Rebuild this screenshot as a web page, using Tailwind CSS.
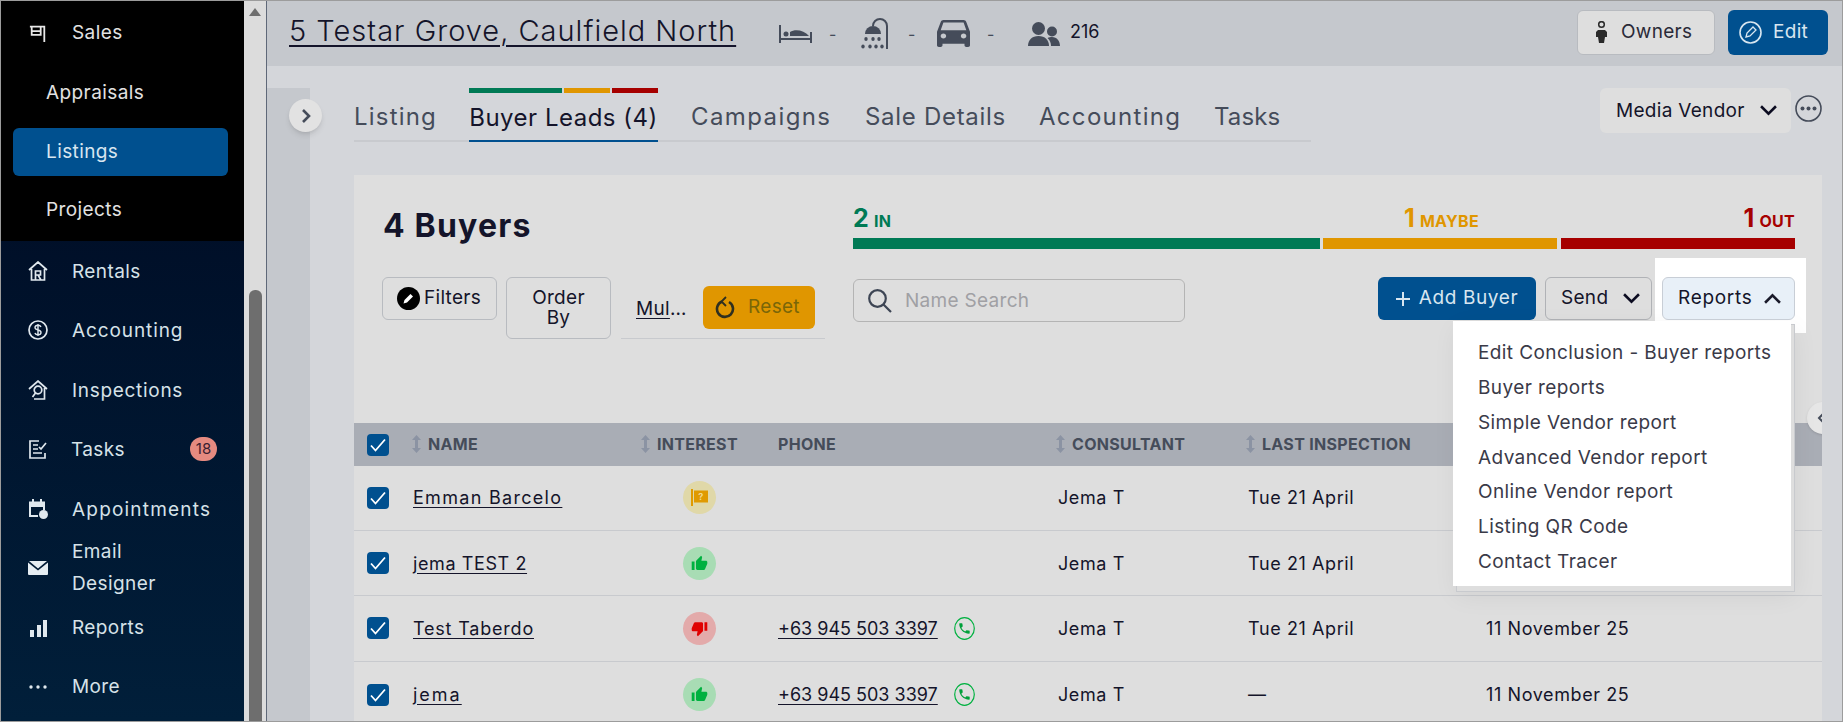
<!DOCTYPE html>
<html lang="en">
<head>
  <meta charset="UTF-8" />
  <title>Buyer Leads</title>
  <script src="https://cdn.jsdelivr.net/npm/@tailwindcss/browser@4"></script>
</head>
<body class="bg-[#d4d6da] text-[#14142a] font-['Inter',sans-serif] text-[19px] tracking-[0.3px]">
  <svg class="hidden">
    <symbol id="check" viewBox="0 0 22 22"><path d="M4 11.500l4.500 5L18 5.500" fill="none" stroke="#fff" stroke-width="1.800"/></symbol>
    <symbol id="sort" viewBox="0 0 9 18"><path d="M4.500 0L9 5H6v8h3l-4.500 5L0 13h3V5H0z" fill="#8b93a3"/></symbol>
    <symbol id="up" viewBox="0 0 24 24"><path d="M1 21h4V9H1v12zm22-11c0-1.100-.9-2-2-2h-6.310l.95-4.570.03-.32c0-.41-.17-.79-.44-1.060L14.170 1 7.590 7.590C7.220 7.950 7 8.450 7 9v10c0 1.100.9 2 2 2h9c.83 0 1.540-.5 1.840-1.220l3.020-7.050c.09-.23.14-.47.14-.73v-2z"/></symbol>
    <symbol id="phone" viewBox="0 0 21 23"><ellipse cx="10.500" cy="11.500" rx="9.800" ry="10.800" fill="none" stroke="#00b140" stroke-width="1.200"/><path transform="translate(3.500 4.500) scale(.58)" d="M6.620 10.790c1.440 2.830 3.760 5.140 6.590 6.590l2.200-2.200c.27-.27.67-.36 1.020-.24 1.120.37 2.330.57 3.570.57.55 0 1 .45 1 1V20c0 .55-.45 1-1 1-9.390 0-17-7.610-17-17 0-.55.45-1 1-1h3.500c.55 0 1 .45 1 1 0 1.250.2 2.450.57 3.570.11.35.03.74-.25 1.020l-2.200 2.200z" fill="#00a03a"/></symbol>
  </svg>

  <div class="flex h-[722px] w-[1843px] overflow-hidden border border-[#9c9c9c]">
    <!-- sidebar -->
    <aside class="flex w-[243px] shrink-0 flex-col bg-gradient-to-b from-[#000820] to-[#011f3a] text-[#d6e2e8] tracking-[0.4px]">
      <div class="h-[240px] shrink-0 bg-black text-[#e2e2e2]">
        <div class="flex h-[61px] items-center pt-[3px]">
          <svg class="ml-[28px] mr-[25px] h-[18px] w-[18px]" viewBox="0 0 20 20" fill="none" stroke="#e8e8e8" stroke-width="2"><path d="M1 3h17M17 3v17M3 3v9h10V3M3 8h10"/></svg>
          <span>Sales</span>
        </div>
        <div class="flex h-[60px] items-center pl-[45px] pt-[2px]">Appraisals</div>
        <div class="ml-[12px] mr-[16px] mt-[6px] flex h-[48px] items-center rounded-md bg-[#00508f] pl-[33px] text-[#d8e6f0]">Listings</div>
        <div class="flex h-[65px] items-center pl-[45px] pt-[4px]">Projects</div>
      </div>
      <div class="flex h-[59.500px] items-center">
        <svg class="ml-[27px] mr-[24px] h-[20px] w-[20px]" viewBox="0 0 20 20" fill="none" stroke="#e0e8ee" stroke-width="1.700"><path d="M1 9l9-8 9 8M3.500 8v11h13V8M7.500 19v-9h5v4h-5M10 14l3 5"/></svg>
        <span class="pt-[2px]">Rentals</span>
      </div>
      <div class="flex h-[59.500px] items-center">
        <svg class="ml-[27px] mr-[24px] h-[20px] w-[20px]" viewBox="0 0 20 20" fill="none" stroke="#e0e8ee" stroke-width="1.700"><circle cx="10" cy="10" r="9"/><path d="M13 7c-.5-1.200-1.600-1.700-3-1.700-1.700 0-3 .8-3 2.300 0 3.300 6 1.600 6 4.800 0 1.500-1.300 2.300-3 2.300-1.500 0-2.600-.6-3.100-1.800M10 4v12" stroke-width="1.400"/></svg>
        <span class="pt-[2px] tracking-[0.9px]">Accounting</span>
      </div>
      <div class="flex h-[59.500px] items-center">
        <svg class="ml-[27px] mr-[24px] h-[20px] w-[20px]" viewBox="0 0 20 20" fill="none" stroke="#e0e8ee" stroke-width="1.700"><path d="M1 9l9-8 9 8M16.500 8v11H6"/><circle cx="10" cy="10" r="3.800"/><path d="M7.500 13l-3 4"/></svg>
        <span class="pt-[2px] tracking-[0.7px]">Inspections</span>
      </div>
      <div class="flex h-[59.500px] items-center">
        <svg class="ml-[27px] mr-[23px] h-[20px] w-[20px]" viewBox="0 0 20 20" fill="none" stroke="#e0e8ee" stroke-width="1.700"><path d="M11 2H2v17h15v-5M5 6h5M5 10h5M5 14h9M11 8l2 2 5-6"/></svg>
        <span class="w-[119px] pt-[2px]">Tasks</span>
        <span class="flex h-[24px] w-[27px] items-center justify-center rounded-full bg-[#e58a80] text-[15px] tracking-normal text-[#3a2030]">18</span>
      </div>
      <div class="flex h-[59.500px] items-center">
        <svg class="ml-[27px] mr-[24px] h-[20px] w-[20px]" viewBox="0 0 20 20" fill="#e0e8ee"><path d="M4 0h2v3H4zM12 0h2v3h-2z"/><path d="M1 2.500h16V11h-2V8H3v8h7v2H1z"/><circle cx="15.500" cy="15.500" r="4.500"/></svg>
        <span class="pt-[2px] tracking-[1.200px]">Appointments</span>
      </div>
      <div class="flex h-[59.500px] items-center">
        <svg class="ml-[27px] mr-[24px] h-[20px] w-[20px]" viewBox="0 0 20 14" fill="#e6edf2"><path d="M1 0h18l-9 7.500zM0 1.500l10 8 10-8V13a1 1 0 01-1 1H1a1 1 0 01-1-1z"/></svg>
        <span class="leading-[32px]">Email<br>Designer</span>
      </div>
      <div class="flex h-[59.500px] items-center">
        <svg class="ml-[27px] mr-[24px] h-[20px] w-[20px]" viewBox="0 0 20 20" fill="#e0e8ee"><path d="M2 12h4v7H2zM9 7h4v12H9zM15 2h4v17h-4z"/></svg>
        <span>Reports</span>
      </div>
      <div class="flex h-[59.500px] items-center">
        <svg class="ml-[27px] mr-[24px] h-[20px] w-[20px]" viewBox="0 0 20 20" fill="#e0e8ee"><circle cx="3" cy="10" r="1.700"/><circle cx="10" cy="10" r="1.700"/><circle cx="17" cy="10" r="1.700"/></svg>
        <span>More</span>
      </div>
    </aside>

    <!-- scrollbar -->
    <div class="flex w-[22px] shrink-0 flex-col items-center bg-[#dcdcdc] pt-[7px]">
      <div class="h-0 w-0 border-x-[6px] border-b-[8px] border-x-transparent border-b-[#6e6e6e]"></div>
      <div class="mt-[274px] h-[440px] w-[13px] rounded-t-md bg-[#6e6e6e]"></div>
    </div>

    <main class="relative flex min-w-0 flex-1 flex-col border-l border-[#5f6878]">
      <header class="flex h-[65px] shrink-0 items-center bg-[#c5c8cd] pl-[22px]">
        <a class="-mt-[5px] w-[447px] whitespace-nowrap text-[29px] font-light tracking-[1px] underline decoration-[1.500px] underline-offset-[4px]">5 Testar Grove, Caulfield North</a>
        <svg class="ml-[43px] h-[18px] w-[33px]" viewBox="0 0 33 18" fill="#454c5a"><path d="M0 0h2v18H0zM31 7h2v11h-2zM2 13h29v2H2z"/><circle cx="7" cy="9" r="2.500"/><path d="M11 11V7c5-3 14-2 19 4z"/></svg>
        <span class="ml-[17px] w-[6px] text-[16px] text-[#454c5a]">-</span>
        <svg class="ml-[26px] h-[31px] w-[27px]" viewBox="0 0 27 31" fill="#454c5a"><path d="M26 31V8a7 7 0 00-14 0" fill="none" stroke="#454c5a" stroke-width="2"/><path d="M4 16a8 8 0 0116 0z"/><ellipse cx="5" cy="21" rx="1.700" ry="2"/><ellipse cx="12" cy="21" rx="1.700" ry="2"/><ellipse cx="18" cy="21" rx="1.700" ry="2"/><ellipse cx="2" cy="28.500" rx="1.700" ry="2"/><ellipse cx="9" cy="28.500" rx="1.700" ry="2"/><ellipse cx="15" cy="28.500" rx="1.700" ry="2"/><ellipse cx="21" cy="28.500" rx="1.700" ry="2"/></svg>
        <span class="ml-[20px] w-[6px] text-[16px] text-[#454c5a]">-</span>
        <svg class="ml-[23px] h-[27px] w-[33px]" viewBox="3 5 18 16" preserveAspectRatio="none" fill="#454c5a"><path d="M18.920 6.010C18.720 5.420 18.160 5 17.500 5h-11c-.66 0-1.210.42-1.420 1.010L3 12v8c0 .55.45 1 1 1h1c.55 0 1-.45 1-1v-1h12v1c0 .55.45 1 1 1h1c.55 0 1-.45 1-1v-8l-2.080-5.990zM6.500 16c-.83 0-1.500-.67-1.500-1.500S5.670 13 6.500 13s1.500.67 1.500 1.500S7.330 16 6.500 16zm11 0c-.83 0-1.500-.67-1.500-1.500s.67-1.500 1.500-1.500 1.500.67 1.500 1.500-.67 1.500-1.500 1.500zM5 11l1.500-4.500h11L19 11H5z"/></svg>
        <span class="ml-[17px] w-[6px] text-[16px] text-[#454c5a]">-</span>
        <svg class="ml-[35px] h-[24px] w-[32px]" viewBox="0 0 32 24" fill="#454c5a"><circle cx="10.500" cy="6.500" r="6.500"/><path d="M0 24c0-6 4-10 10.500-10S21 18 21 24z"/><circle cx="24" cy="9.500" r="5"/><path d="M23 24c0-3-1-6-3.500-8 1.500-1 3-1 4.500-1 5 0 8 4 8 9z"/></svg>
        <span class="-mt-[4px] ml-[10px] text-[18px] tracking-normal">216</span>
        <button class="-mt-[3px] ml-auto flex h-[45px] w-[138px] items-center rounded-md border border-[#b8bbc0] bg-[#dedede] pl-[18px]">
          <svg class="h-[22px] w-[11px]" viewBox="0 0 11 22" fill="#2a2a2a"><circle cx="5.500" cy="3.500" r="2.800" fill="none" stroke="#2a2a2a" stroke-width="1.500"/><path d="M2 9h7l2 2v5H9l-1 6H3l-1-6H0v-5z"/></svg>
          <span class="ml-[14px] text-[#2a2a38]">Owners</span>
        </button>
        <button class="-mt-[3px] ml-[13px] mr-[14px] flex h-[45px] w-[100px] items-center rounded-md bg-[#00508f] pl-[11px] text-[#d8e6f0]">
          <svg class="h-[23px] w-[23px]" viewBox="0 0 23 23" fill="none" stroke="#d8e6f0" stroke-width="1.600"><circle cx="11.500" cy="11.500" r="10.500"/><path d="M7 16l1-4 6-6 3 3-6 6z" stroke-width="1.300"/></svg>
          <span class="ml-[11px]">Edit</span>
        </button>
      </header>

      <div class="relative flex min-h-0 flex-1">
        <div class="mt-[22px] w-[43px] shrink-0 bg-[#c5c8cd]"></div>
        <div class="ml-[44px] mr-[20px] flex min-w-0 flex-1 flex-col pt-[22px]">
          <!-- tabs -->
          <div class="flex h-[54px] shrink-0 items-start justify-between">
            <div class="flex h-[54px] w-[957px] items-end gap-[33px] border-b-2 border-[#c8cace] text-[24px] tracking-[0.7px] text-[#454c5a]">
              <div class="flex h-[54px] w-[82px] items-center pt-[7px] tracking-[1.200px]">Listing</div>
              <div class="-mb-[2px] flex h-[54px] w-[189px] flex-col border-b-2 border-[#00508f] text-[#14142a]">
                <div class="flex h-[5px] gap-[2px]"><div class="w-[93px] bg-[#007a55]"></div><div class="w-[46px] bg-[#e09600]"></div><div class="w-[46px] bg-[#a60000]"></div></div>
                <div class="flex flex-1 items-center justify-center whitespace-nowrap pt-[2px] tracking-[0.5px]">Buyer Leads (4)</div>
              </div>
              <div class="flex h-[54px] w-[141px] items-center pt-[7px] tracking-[1.400px]">Campaigns</div>
              <div class="flex h-[54px] w-[141px] items-center whitespace-nowrap pt-[7px]">Sale Details</div>
              <div class="flex h-[54px] w-[142px] items-center pt-[7px] tracking-[1.300px]">Accounting</div>
              <div class="flex h-[54px] w-[65px] items-center pt-[7px] tracking-[0.1px]">Tasks</div>
            </div>
            <div class="flex items-start">
              <button class="flex h-[45px] w-[191px] items-center rounded-md bg-[#dedede] pl-[16px]">
                <span class="w-[144px] whitespace-nowrap pt-[2px] text-left">Media Vendor</span>
                <svg class="h-[11px] w-[17px]" viewBox="0 0 16 10" fill="none" stroke="#0b0b20" stroke-width="2.400"><path d="M1 1l7 7 7-7"/></svg>
              </button>
              <svg class="ml-[4px] mt-[7px] h-[27px] w-[27px]" viewBox="0 0 27 27" fill="#454c5a"><circle cx="13.500" cy="13.500" r="12.500" fill="none" stroke="#454c5a" stroke-width="1.600"/><circle cx="7.500" cy="13.500" r="2"/><circle cx="13.500" cy="13.500" r="2"/><circle cx="19.500" cy="13.500" r="2"/></svg>
            </div>
          </div>

          <!-- panel -->
          <section class="relative mt-[33px] flex min-h-0 flex-1 flex-col overflow-hidden bg-[#dedede]">
            <div class="grid h-[248px] shrink-0 grid-cols-[499px_1fr] pr-[28px]">
              <div>
                <div class="flex h-[102px] items-center pl-[29px] text-[32px] font-bold tracking-[1.200px]">4 Buyers</div>
                <div class="ml-[28px] flex items-start">
                  <button class="flex h-[43px] w-[115px] items-center rounded-md border border-[#b8bbc0] pl-[14px]">
                    <svg class="h-[23px] w-[23px]" viewBox="0 0 23 23"><circle cx="11.500" cy="11.500" r="11.500" fill="#000"/><path d="M6.500 16.500l1-3.500 6-6 2.500 2.500-6 6z" fill="#fff"/></svg>
                    <span class="ml-[4px]">Filters</span>
                  </button>
                  <button class="ml-[9px] h-[62px] w-[105px] rounded-md border border-[#b8bbc0] leading-[20px]">Order<br>By</button>
                  <div class="ml-[10px] flex h-[62px] w-[204px] items-start border-b border-[#c8cace]">
                    <span class="ml-[15px] mt-[18px] w-[47px] whitespace-nowrap"><span class="underline underline-offset-[3px]">Mul</span>…</span>
                    <button class="ml-[20px] mt-[9px] flex h-[43px] w-[112px] items-center rounded-md bg-[#e09600] pl-[12px] text-[#7a6608]">
                      <svg class="h-[24px] w-[20px]" viewBox="0 0 20 24" fill="none" stroke="#2f3020" stroke-width="2.600"><path d="M7 5.500A8 8 0 1 0 14 6"/><path d="M11 1L6.500 5.500 11 10" stroke-width="1.800"/></svg>
                      <span class="ml-[13px]">Reset</span>
                    </button>
                  </div>
                </div>
              </div>
              <div class="pt-[32px]">
                <div class="flex h-[24px] items-center font-bold">
                  <div class="w-[470px] text-[#007a55]"><span class="text-[25px]">2</span> <span class="text-[16px]">IN</span></div>
                  <div class="w-[237px] text-center text-[#e09600]"><span class="text-[25px]">1</span> <span class="text-[16px]">MAYBE</span></div>
                  <div class="flex-1 text-right text-[#a60000]"><span class="text-[25px]">1</span> <span class="text-[16px]">OUT</span></div>
                </div>
                <div class="mt-[7px] flex h-[11px] gap-[3px]">
                  <div class="w-[467px] bg-[#007a55]"></div>
                  <div class="w-[234px] bg-[#e09600]"></div>
                  <div class="ml-px flex-1 bg-[#a60000]"></div>
                </div>
                <div class="mt-[28px] flex items-start">
                  <div class="mt-[2px] flex h-[43px] w-[332px] items-center rounded-md border border-[#b4b4b4] pl-[14px] text-[#a0a0a4]">
                    <svg class="h-[24px] w-[24px]" viewBox="0 0 24 24" fill="none" stroke="#3d4554" stroke-width="2.200"><circle cx="9.500" cy="9.500" r="8.300"/><path d="M15.500 15.500L23 23"/></svg>
                    <span class="ml-[13px] pt-[2px]">Name Search</span>
                  </div>
                  <button class="ml-[193px] flex h-[43px] w-[158px] items-center justify-center gap-[9px] rounded-md bg-[#00508f] text-[#d8e6f0]">
                    <svg class="h-[14px] w-[14px]" viewBox="0 0 14 14" fill="#d8e6f0"><path d="M6 0h2v6h6v2H8v6H6V8H0V6h6z"/></svg>
                    <span class="whitespace-nowrap tracking-[0.6px]">Add Buyer</span>
                  </button>
                  <button class="ml-[9px] flex h-[43px] w-[107px] items-center rounded-md border border-[#b0b2b6] pl-[15px]">
                    <span class="w-[62px] text-left">Send</span>
                    <svg class="h-[11px] w-[17px]" viewBox="0 0 16 10" fill="none" stroke="#0b0b20" stroke-width="2.400"><path d="M1 1l7 7 7-7"/></svg>
                  </button>
                  <button class="relative z-20 ml-[10px] flex h-[43px] w-[133px] items-center rounded-md border border-[#c8ced6] bg-[#e8f0f8] pl-[15px]">
                    <span class="w-[86px] text-left tracking-[0.7px]">Reports</span>
                    <svg class="h-[11px] w-[17px]" viewBox="0 0 16 10" fill="none" stroke="#1a1a2a" stroke-width="2.400"><path d="M1 9l7-7 7 7"/></svg>
                  </button>
                </div>
              </div>
            </div>

            <!-- table -->
            <div class="grid h-[43px] shrink-0 grid-cols-[58px_229px_137px_278px_190px_240px_1fr] items-center bg-[#a9adb5] text-[16px] font-bold text-[#454c5a]">
              <div class="pl-[13px]"><svg class="h-[22px] w-[22px] rounded-[4px] bg-[#00508f]"><use href="#check"/></svg></div>
              <div class="flex items-center gap-[7px] pb-[2px]"><svg class="h-[18px] w-[9px]"><use href="#sort"/></svg>NAME</div>
              <div class="flex items-center gap-[7px] pb-[2px]"><svg class="h-[18px] w-[9px]"><use href="#sort"/></svg>INTEREST</div>
              <div class="pb-[2px]">PHONE</div>
              <div class="flex items-center gap-[7px] pb-[2px]"><svg class="h-[18px] w-[9px]"><use href="#sort"/></svg>CONSULTANT</div>
              <div class="flex items-center gap-[7px] pb-[2px]"><svg class="h-[18px] w-[9px]"><use href="#sort"/></svg>LAST INSPECTION</div>
              <div></div>
            </div>

            <div class="grid h-[65px] shrink-0 grid-cols-[58px_229px_137px_278px_190px_240px_1fr] items-center border-b border-[#c8cace] pb-[1px] text-[18px] tracking-[0.6px]">
              <div class="pl-[13px]"><svg class="h-[22px] w-[22px] rounded-[4px] bg-[#00508f]"><use href="#check"/></svg></div>
              <div class="pl-px"><a class="tracking-[1.300px] underline underline-offset-[3px]">Emman Barcelo</a></div>
              <div class="pl-[42px]"><span class="flex h-[33px] w-[33px] items-center justify-center rounded-full bg-[#e0d8a8]"><svg class="h-[17px] w-[17px]" viewBox="0 0 17 17" fill="#e09a00"><path d="M0 0h2v17H0zM3 1.500h14v12H3z"/><text x="10" y="11" font-size="9" font-weight="700" text-anchor="middle" fill="#f0d890">?</text></svg></span></div>
              <div></div>
              <div class="pl-[2px]">Jema T</div>
              <div class="pl-[2px]">Tue 21 April</div>
              <div></div>
            </div>
            <div class="grid h-[65px] shrink-0 grid-cols-[58px_229px_137px_278px_190px_240px_1fr] items-center border-b border-[#c8cace] text-[18px] tracking-[0.6px]">
              <div class="pl-[13px]"><svg class="h-[22px] w-[22px] rounded-[4px] bg-[#00508f]"><use href="#check"/></svg></div>
              <div class="pl-px"><a class="underline underline-offset-[3px]">jema TEST 2</a></div>
              <div class="pl-[42px]"><span class="flex h-[33px] w-[33px] items-center justify-center rounded-full bg-[#a8dcb4]"><svg class="h-[17px] w-[17px] fill-[#00b140]"><use href="#up"/></svg></span></div>
              <div></div>
              <div class="pl-[2px]">Jema T</div>
              <div class="pl-[2px]">Tue 21 April</div>
              <div></div>
            </div>
            <div class="grid h-[66px] shrink-0 grid-cols-[58px_229px_137px_278px_190px_240px_1fr] items-center border-b border-[#c8cace] pb-[1px] text-[18px] tracking-[0.6px]">
              <div class="pl-[13px]"><svg class="h-[22px] w-[22px] rounded-[4px] bg-[#00508f]"><use href="#check"/></svg></div>
              <div class="pl-px"><a class="tracking-[0.8px] underline underline-offset-[3px]">Test Taberdo</a></div>
              <div class="pl-[42px]"><span class="flex h-[33px] w-[33px] items-center justify-center rounded-full bg-[#e3aaaa]"><svg class="h-[17px] w-[17px] rotate-180 fill-[#e00000]"><use href="#up"/></svg></span></div>
              <div class="flex items-center"><a class="w-[176px] whitespace-nowrap tracking-normal underline underline-offset-[3px]">+63 945 503 3397</a><svg class="h-[23px] w-[21px]"><use href="#phone"/></svg></div>
              <div class="pl-[2px]">Jema T</div>
              <div class="pl-[2px]">Tue 21 April</div>
              <div>11 November 25</div>
            </div>
            <div class="grid h-[59px] shrink-0 grid-cols-[58px_229px_137px_278px_190px_240px_1fr] items-center pt-[6px] text-[18px] tracking-[0.6px]">
              <div class="pl-[13px]"><svg class="h-[22px] w-[22px] rounded-[4px] bg-[#00508f]"><use href="#check"/></svg></div>
              <div class="pl-px"><a class="tracking-[2px] underline underline-offset-[3px]">jema</a></div>
              <div class="pl-[42px]"><span class="flex h-[33px] w-[33px] items-center justify-center rounded-full bg-[#a8dcb4]"><svg class="h-[17px] w-[17px] fill-[#00b140]"><use href="#up"/></svg></span></div>
              <div class="flex items-center"><a class="w-[176px] whitespace-nowrap tracking-normal underline underline-offset-[3px]">+63 945 503 3397</a><svg class="h-[23px] w-[21px]"><use href="#phone"/></svg></div>
              <div class="pl-[2px]">Jema T</div>
              <div class="pl-[2px]">—</div>
              <div>11 November 25</div>
            </div>

            <!-- collapse handle, under the open menu -->
            <div class="absolute left-[1453px] top-[227px] flex h-[32px] w-[32px] items-center rounded-full bg-[#e6e6e6] pl-[10px] shadow">
              <svg class="h-[10px] w-[6px]" viewBox="0 0 6 10" fill="none" stroke="#454c5a" stroke-width="2"><path d="M6 1L2 5l4 4"/></svg>
            </div>

            <!-- Reports menu -->
            <div class="absolute left-[1301px] top-[83px] z-10 h-[75px] w-[151px] bg-white"></div>
            <div class="absolute left-[1102px] top-[149px] z-10 h-[268px] w-[339px] border border-[#c8cace] bg-[#dedede] shadow-[0_4px_24px_rgba(0,0,0,0.06)]"></div>
            <ul class="absolute left-[1099px] top-[146px] z-10 flex h-[265px] w-[338px] flex-col bg-white pl-[25px] pt-[15px] tracking-[0.4px] text-[#3a3a48]">
              <li class="flex h-[34.800px] items-center whitespace-nowrap">Edit Conclusion - Buyer reports</li>
              <li class="flex h-[34.800px] items-center">Buyer reports</li>
              <li class="flex h-[34.800px] items-center">Simple Vendor report</li>
              <li class="flex h-[34.800px] items-center">Advanced Vendor report</li>
              <li class="flex h-[34.800px] items-center">Online Vendor report</li>
              <li class="flex h-[34.800px] items-center">Listing QR Code</li>
              <li class="flex h-[34.800px] items-center">Contact Tracer</li>
            </ul>
          </section>
        </div>
      </div>

      <!-- expand handle -->
      <button class="absolute left-[22px] top-[98px] flex h-[33px] w-[33px] items-center justify-center rounded-full bg-[#e2e2e2] shadow-md">
        <svg class="h-[16px] w-[10px]" viewBox="0 0 10 16" fill="none" stroke="#454c5a" stroke-width="2.600"><path d="M2 2l6 6-6 6"/></svg>
      </button>
    </main>
  </div>
</body>
</html>
